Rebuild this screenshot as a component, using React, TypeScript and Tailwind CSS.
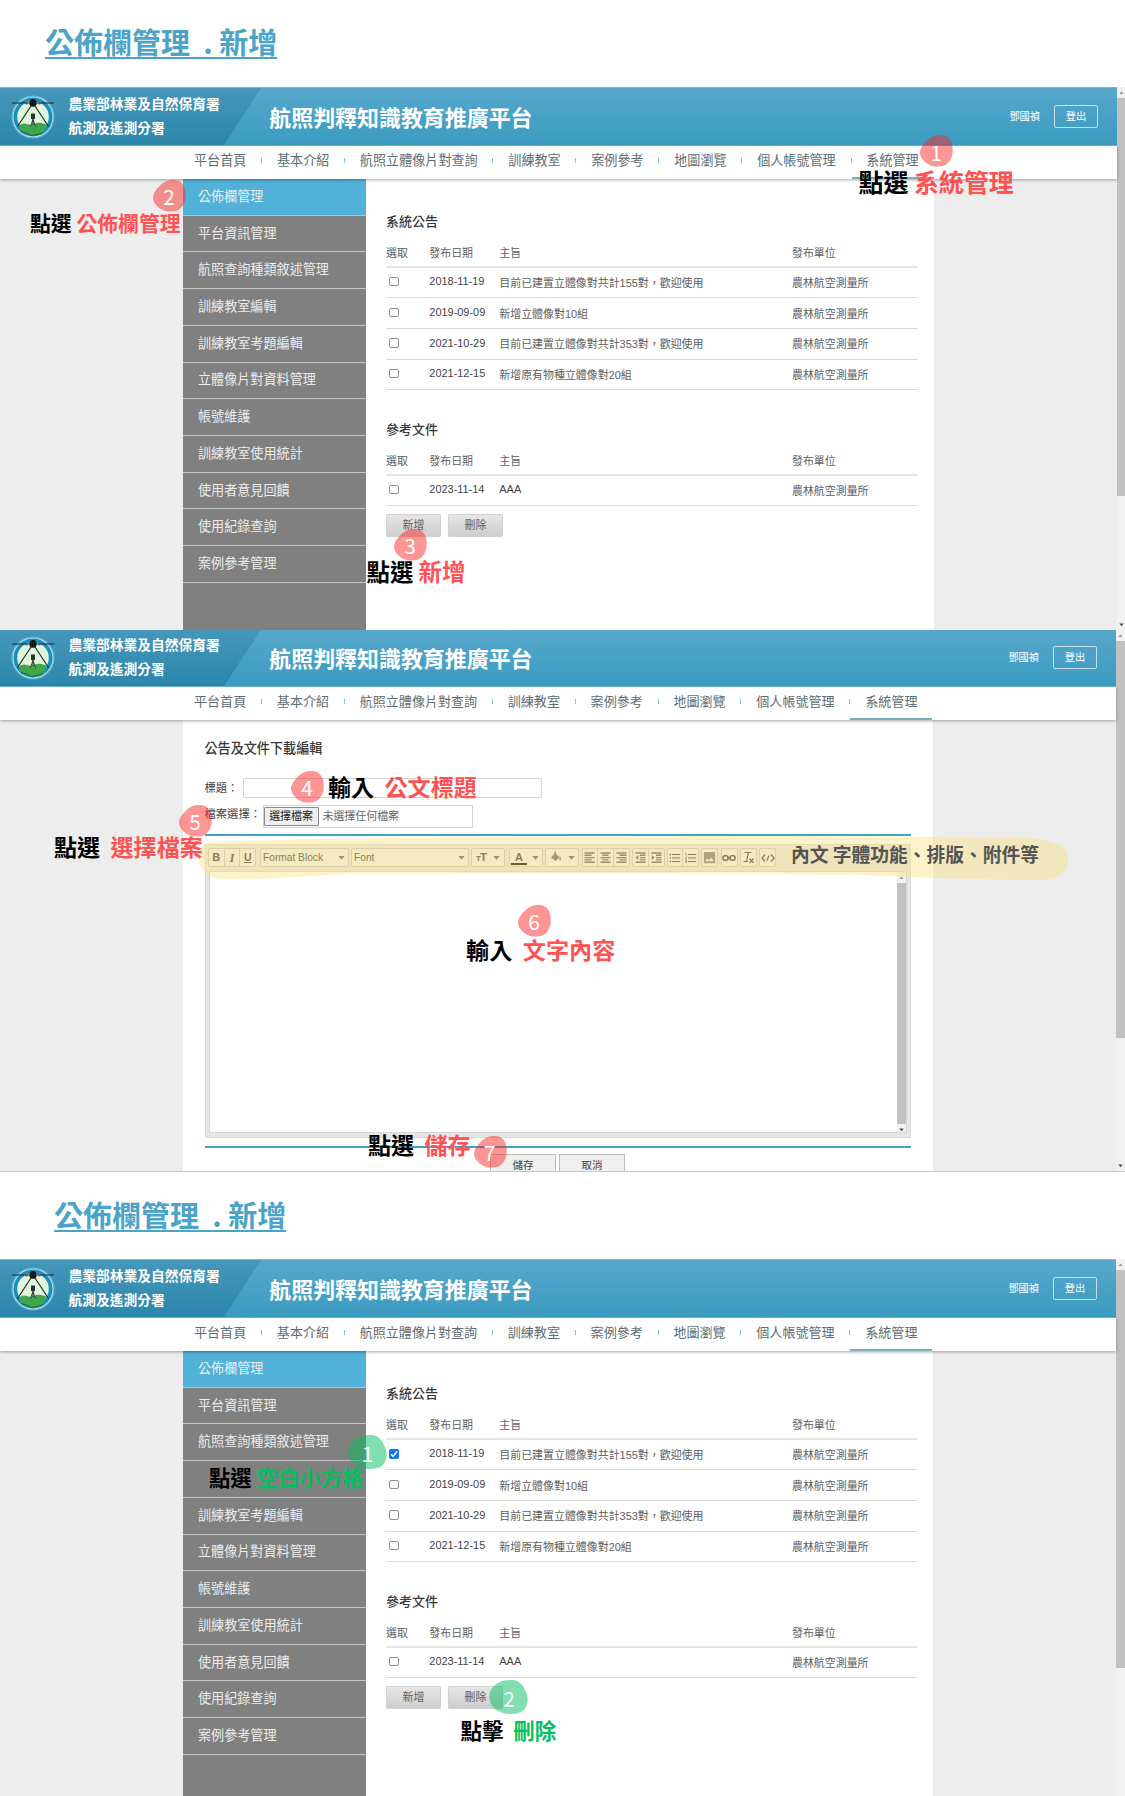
import React from "react";
import { MdFormatListBulleted, MdFormatListNumbered, MdImage } from "react-icons/md";

const navItems = ["平台首頁", "基本介紹", "航照立體像片對查詢", "訓練教室", "案例參考", "地圖瀏覽", "個人帳號管理", "系統管理"];

const sideItems = [
  "公佈欄管理",
  "平台資訊管理",
  "航照查詢種類敘述管理",
  "訓練教室編輯",
  "訓練教室考題編輯",
  "立體像片對資料管理",
  "帳號維護",
  "訓練教室使用統計",
  "使用者意見回饋",
  "使用紀錄查詢",
  "案例參考管理",
];

type Row = { date: string; subject: string; unit: string };

const notices: Row[] = [
  { date: "2018-11-19", subject: "目前已建置立體像對共計155對，歡迎使用", unit: "農林航空測量所" },
  { date: "2019-09-09", subject: "新增立體像對10組", unit: "農林航空測量所" },
  { date: "2021-10-29", subject: "目前已建置立體像對共計353對，歡迎使用", unit: "農林航空測量所" },
  { date: "2021-12-15", subject: "新增原有物種立體像對20組", unit: "農林航空測量所" },
];

const documents: Row[] = [{ date: "2023-11-14", subject: "AAA", unit: "農林航空測量所" }];

function Logo() {
  return (
    <svg className="h-[46px] w-[46px] shrink-0" viewBox="0 0 46 46">
      <circle cx="23" cy="23" r="21.6" fill="#8fd0ea" opacity="0.55" />
      <circle cx="23" cy="23" r="20.3" fill="#c5e6f2" />
      <circle cx="23" cy="23" r="19.5" fill="#1690bd" />
      <circle cx="23" cy="23" r="15.8" fill="#e0f4dc" />
      <path d="M9.500 31 Q13 28.500 17 30 T25 29.500 T36.500 30.500 L34 37.500 Q28 42 22.500 41.500 Q15 39.500 11 38 Z" fill="#3fa64c" />
      <path d="M11 37.500 Q16 38.500 22 41.500 Q29 40.500 33 38.500" stroke="#1c5a34" strokeWidth="0.9" fill="none" />
      <path d="M2 9 H44" stroke="#1b2b33" strokeWidth="1" fill="none" />
      <path d="M21 12 L7.500 32.500 M25 12 L38.500 32.500" stroke="#20302f" strokeWidth="1.200" fill="none" />
      <path d="M19.500 7 L21.500 5 H24.500 L26.500 7 L26.500 11 L24.500 12.800 H21.500 L19.500 11 Z" fill="#141a1c" />
      <circle cx="16.500" cy="9.200" r="1.300" fill="#8b4b4b" />
      <circle cx="29.500" cy="9.200" r="1.300" fill="#8b4b4b" />
      <path d="M21 19.500 H25 V25 H21 Z M22.400 25 H23.600 V31 H22.400 Z" fill="#26332e" />
      <path d="M23 25.500 L20.500 32.500 M23 25.500 L25.500 32.500" stroke="#26332e" strokeWidth="0.9" />
    </svg>
  );
}

function SiteHeader({ trimmed, narrow }: { trimmed?: boolean; narrow?: boolean }) {
  return (
    <header
      className={
        "relative shrink-0 overflow-hidden border-b border-[#6fb7d3] bg-linear-to-b from-[#55a8cb] to-[#3b9bc1] text-white " +
        (trimmed ? "h-[57px]" : "h-[59px] border-t border-t-[#7db6cf]")
      }
    >
      <div className="absolute inset-y-0 left-0 w-[261px] bg-linear-to-b from-[#4597bb] to-[#2b86ab] [clip-path:polygon(0_0,100%_0,224px_100%,0_100%)]" />
      <div className={"relative flex h-[59px] items-start " + (trimmed ? "-mt-[2px]" : "-mt-px")}>
        <div className="w-[68.500px] pt-[6.500px] pl-[9.500px]">
          <Logo />
        </div>
        <div className="w-[200.800px] pt-[6px] text-[13.750px] leading-[23.500px] font-bold whitespace-nowrap">
          <div>農業部林業及自然保育署</div>
          <div>航測及遙測分署</div>
        </div>
        <h1 className="flex-1 pt-[17px] text-[21.950px] leading-[30px] font-bold whitespace-nowrap">航照判釋知識教育推廣平台</h1>
        <div className={"flex items-center pt-[18px] text-[10.200px] " + (narrow ? "pr-[19px]" : "pr-[19px]")}>
          <span className="mr-[14px] pt-px">鄧國禎</span>
          <span className="flex h-[22.500px] w-[44px] items-center justify-center rounded-[2px] border border-[#c3e0ec]">登出</span>
        </div>
      </div>
    </header>
  );
}

function NavBar({ narrow, underline }: { narrow?: boolean; underline: string }) {
  return (
    <nav
      className={
        "relative z-10 flex h-[33px] shrink-0 items-start bg-white pl-[194px] whitespace-nowrap text-[#5d6e74] shadow-[0_1px_3px_rgba(0,0,0,0.35)] " +
        (narrow ? "text-[13.060px]" : "text-[13.090px]")
      }
    >
      {navItems.map((item, i) => (
        <React.Fragment key={item}>
          {i > 0 && (
            <span className="mt-[12px] flex w-[30.650px] justify-center">
              <span className="h-[5px] w-px bg-[#7cc3de]" />
            </span>
          )}
          <span className="leading-[30px]">{item}</span>
        </React.Fragment>
      ))}
      <span className={"absolute bottom-0 h-[2px] w-[82px] bg-[#78adc3] " + underline} />
    </nav>
  );
}

function ScrollBar({ thumb, bottomArrow, className }: { thumb: string; bottomArrow?: boolean; className: string }) {
  return (
    <div className={"flex flex-col items-center bg-[#f1f1f1] " + className}>
      <svg className="h-[11px] w-[7px] shrink-0" viewBox="0 0 7 11">
        <path d="M1.500 7 L3.500 4.500 L5.500 7 Z" fill="#909090" />
      </svg>
      <div className={"w-full shrink-0 bg-[#c1c1c1] " + thumb} />
      {bottomArrow && (
        <svg className="mt-auto h-[11px] w-[7px] shrink-0" viewBox="0 0 7 11">
          <path d="M1.300 4.500 L3.500 7.300 L5.700 4.500 Z" fill="#4a4a4a" />
        </svg>
      )}
    </div>
  );
}

function SideMenu({ blankRow }: { blankRow?: number }) {
  return (
    <aside className="w-[183px] shrink-0 overflow-hidden bg-[#808080] text-[13.100px] text-[#ececec]">
      {sideItems.map((item, i) => (
        <div
          key={item}
          className={
            "flex h-[36.720px] items-center border-b border-[#c4c4c4] pb-[0.500px] pl-[15px] " + (i === 0 ? "bg-[#51b1d8]" : "")
          }
        >
          {i === blankRow ? null : item}
        </div>
      ))}
    </aside>
  );
}

function Check({ checked }: { checked?: boolean }) {
  if (checked) {
    return (
      <span className="mb-px ml-[3px] flex size-[10px] items-center justify-center rounded-[2px] bg-[#0b76f0]">
        <svg viewBox="0 0 10 10" className="size-[10px]">
          <path d="M2 5.200 L4.100 7.300 L8 2.600" stroke="#fff" strokeWidth="1.500" fill="none" />
        </svg>
      </span>
    );
  }
  return <span className="mb-[1.500px] ml-[3px] size-[9.500px] rounded-[2px] border border-[#8f8f8f] bg-white" />;
}

function DataTable({ title, rows, checkedRow }: { title: string; rows: Row[]; checkedRow?: number }) {
  return (
    <section className="text-[10.950px] whitespace-nowrap text-[#606060]">
      <h2 className="h-[21px] text-[13px] leading-[21px] font-medium text-[#3a3a3a]">{title}</h2>
      <div className="grid h-[35.600px] grid-cols-[43.300px_70px_292.700px_1fr] items-center border-b-2 border-[#e6e6e6] pt-[8px]">
        <span>選取</span>
        <span>發布日期</span>
        <span>主旨</span>
        <span>發布單位</span>
      </div>
      {rows.map((row, i) => (
        <div
          key={row.date}
          className="grid h-[30.650px] grid-cols-[43.300px_70px_292.700px_1fr] items-center border-b border-[#d8d8d8]"
        >
          <Check checked={checkedRow === i} />
          <span className="pb-[1.500px] text-[#444]">{row.date}</span>
          <span className={row.subject === "AAA" ? "pb-[1.500px] text-[#444]" : "pt-[2px]"}>{row.subject}</span>
          <span className="pt-[2px]">{row.unit}</span>
        </div>
      ))}
    </section>
  );
}

function GreyButton({ label }: { label: string }) {
  return (
    <span className="flex h-[23px] w-[55px] items-center justify-center rounded-[1px] border border-[#d2d2d2] bg-linear-to-b from-[#e6e6e6] to-[#cecece] text-[10.950px] text-[#606060]">
      {label}
    </span>
  );
}

function BulletinPage({
  narrow,
  checkedRow,
  blankRow,
  thumb,
}: {
  narrow?: boolean;
  checkedRow?: number;
  blankRow?: number;
  thumb: string;
}) {
  return (
    <div className="flex h-full">
      <div className={"flex shrink-0 flex-col " + (narrow ? "w-[1116px]" : "w-[1117px]")}>
        <SiteHeader narrow={narrow} />
        <NavBar narrow={narrow} underline={narrow ? "left-[850px]" : "left-[851.500px]"} />
        <div className="flex min-h-0 flex-1 bg-[#ededed] pl-[183px]">
          <SideMenu blankRow={blankRow} />
          <main className={"bg-white pt-[32px] pl-[20px] " + (narrow ? "w-[567px]" : "w-[568px]")}>
            <div className={narrow ? "w-[531px]" : "w-[532px]"}>
              <DataTable title="系統公告" rows={notices} checkedRow={checkedRow} />
              <div className="h-[28.800px]" />
              <DataTable title="參考文件" rows={documents} />
              <div className="mt-[8px] flex gap-[7px]">
                <GreyButton label="新增" />
                <GreyButton label="刪除" />
              </div>
            </div>
          </main>
        </div>
      </div>
      <ScrollBar className="flex-1" thumb={thumb} bottomArrow={!narrow} />
    </div>
  );
}

function Tool({ children, className }: { children: React.ReactNode; className: string }) {
  return (
    <div className={"flex h-[19px] shrink-0 items-stretch divide-x divide-[#c4c4c4] rounded-[2px] border border-[#c4c4c4] bg-[#f0f0f0] " + className}>
      {children}
    </div>
  );
}

function Cell({ children, className = "justify-center" }: { children: React.ReactNode; className?: string }) {
  return <span className={"flex min-w-0 flex-1 items-center " + className}>{children}</span>;
}

function Caret() {
  return (
    <svg className="h-[4px] w-[7px] shrink-0" viewBox="0 0 7 4">
      <path d="M0.300 0 H6.700 L3.500 3.800 Z" fill="#5c5c5c" />
    </svg>
  );
}

function LinesIcon({ d, arrow }: { d: string; arrow?: string }) {
  return (
    <svg className="h-[11px] w-[11px] text-[#555]" viewBox="0 0 11 11">
      <path d={d} stroke="currentColor" strokeWidth="1.400" fill="none" />
      {arrow && <path d={arrow} fill="currentColor" />}
    </svg>
  );
}

function EditorToolbar() {
  return (
    <div className="flex h-[26px] items-center pb-px pl-[2.500px] text-[#383838]">
      <Tool className="mr-[4px] w-[48px]">
        <Cell className="justify-center text-[11px] font-black">B</Cell>
        <Cell className="justify-center font-['Liberation_Serif',serif] text-[12px] font-bold italic">I</Cell>
        <Cell className="justify-center text-[10.500px] font-bold underline">U</Cell>
      </Tool>
      <Tool className="mr-[2px] w-[89px]">
        <Cell className="justify-between pr-[3px] pl-[2px] text-[10.200px] whitespace-nowrap">
          Format Block
          <Caret />
        </Cell>
      </Tool>
      <Tool className="mr-[2px] w-[118px]">
        <Cell className="justify-between pr-[3px] pl-[2px] text-[10.200px]">
          Font
          <Caret />
        </Cell>
      </Tool>
      <Tool className="mr-[4px] w-[34px]">
        <Cell className="justify-between px-[4px]">
          <span className="flex items-baseline font-bold">
            <span className="text-[8px]">T</span>
            <span className="-ml-px text-[11.500px]">T</span>
          </span>
          <Caret />
        </Cell>
      </Tool>
      <Tool className="mr-[1.500px] w-[34px]">
        <Cell className="justify-between pr-[3px] pl-px">
          <span className="flex h-[14px] w-[16px] justify-center border-b-2 border-black text-[11px] leading-[12px] font-bold">A</span>
          <Caret />
        </Cell>
      </Tool>
      <Tool className="mr-[3px] w-[34px]">
        <Cell className="justify-between pr-[3px] pl-[3px]">
          <svg className="h-[14px] w-[14px]" viewBox="0 0 14 14">
            <path d="M2 6.500 L5.500 2.500 V0.500 H7 V3 L10.500 6.500 L6.500 10 Z M10.800 4.500 Q12.500 7 11.600 9.500 Q10.300 9.500 10.300 8 Z" fill="#666" />
            <path d="M0 12.500 H13" stroke="#fff" strokeWidth="2" />
          </svg>
          <Caret />
        </Cell>
      </Tool>
      <Tool className="mr-[2px] w-[48.500px]">
        <Cell><LinesIcon d="M0.500 1 H10.500 M0.500 3.300 H7.500 M0.500 5.600 H10.500 M0.500 7.900 H7.500 M0.500 10.200 H10.500" /></Cell>
        <Cell><LinesIcon d="M0.500 1 H10.500 M2.500 3.300 H8.500 M0.500 5.600 H10.500 M2.500 7.900 H8.500 M0.500 10.200 H10.500" /></Cell>
        <Cell><LinesIcon d="M0.500 1 H10.500 M3.500 3.300 H10.500 M0.500 5.600 H10.500 M3.500 7.900 H10.500 M0.500 10.200 H10.500" /></Cell>
      </Tool>
      <Tool className="mr-[2px] w-[32.500px]">
        <Cell><LinesIcon d="M0.500 1 H10.500 M5 3.300 H10.500 M5 5.600 H10.500 M5 7.900 H10.500 M0.500 10.200 H10.500" arrow="M3.300 3 V8.200 L0.500 5.600 Z" /></Cell>
        <Cell><LinesIcon d="M0.500 1 H10.500 M5 3.300 H10.500 M5 5.600 H10.500 M5 7.900 H10.500 M0.500 10.200 H10.500" arrow="M0.800 3 V8.200 L3.600 5.600 Z" /></Cell>
      </Tool>
      <Tool className="mr-[2px] w-[32.500px]">
        <Cell><MdFormatListBulleted className="size-[14px]" /></Cell>
        <Cell><MdFormatListNumbered className="size-[14px]" /></Cell>
      </Tool>
      <Tool className="mr-[2.500px] w-[17px]">
        <Cell><MdImage className="size-[15px] shrink-0 text-[#777]" /></Cell>
      </Tool>
      <Tool className="mr-[2.500px] w-[17px]">
        <Cell>
          <svg className="h-[8px] w-[14px]" viewBox="0 0 14 8" fill="none" stroke="currentColor" strokeWidth="1.500">
            <rect x="1" y="1.700" width="5" height="4.600" rx="2" />
            <rect x="8" y="1.700" width="5" height="4.600" rx="2" />
            <path d="M5 4 H9" />
          </svg>
        </Cell>
      </Tool>
      <Tool className="mr-[2px] w-[17px]">
        <Cell>
          <svg className="size-[13px]" viewBox="0 0 13 13" fill="none" stroke="currentColor" strokeWidth="1.200">
            <path d="M2.500 1.500 H9.500 M6.500 1.500 L4.500 10 M1.500 10.500 H6 M7.500 7.500 L11.500 12 M11.500 7.500 L7.500 12" />
          </svg>
        </Cell>
      </Tool>
      <Tool className="w-[17px]">
        <Cell>
          <svg className="h-[10px] w-[14px]" viewBox="0 0 14 10" fill="none" stroke="currentColor" strokeWidth="1.300">
            <path d="M4 1.500 L1 5 L4 8.500 M10 1.500 L13 5 L10 8.500 M8 2.500 L6 7.500" />
          </svg>
        </Cell>
      </Tool>
    </div>
  );
}

function EditorPage() {
  return (
    <div className="flex h-full">
      <div className="flex w-[1116px] shrink-0 flex-col">
        <SiteHeader trimmed narrow />
        <NavBar narrow underline="left-[850px]" />
        <div className="min-h-0 flex-1 overflow-hidden bg-[#ededed] pl-[183px]">
          <main className="h-full w-[750px] bg-white pt-[19px] pl-[21.500px] text-[#444]">
            <h2 className="h-[20px] text-[13.100px] leading-[20px] font-medium text-[#3a3a3a]">公告及文件下載編輯</h2>
            <div className="mt-[19px] flex h-[20px] items-center text-[11.300px]">
              <span className="w-[38.500px] whitespace-nowrap">標題：</span>
              <span className="h-[20px] w-[298.500px] rounded-[2px] border border-[#d3d3d3] bg-white" />
            </div>
            <div className="mt-[7px] flex h-[23px] items-center text-[11.300px]">
              <span className="w-[58px] pb-[4px] whitespace-nowrap">檔案選擇：</span>
              <div className="flex h-[23px] w-[210px] items-center border border-[#d3d3d3] text-[10.950px] text-[#666]">
                <span className="flex h-[19px] w-[55px] items-center justify-center rounded-[1px] border border-[#8a8a8a] bg-[#efefef] text-[#222]">
                  選擇檔案
                </span>
                <span className="pl-[4px]">未選擇任何檔案</span>
              </div>
            </div>
            <div className="mt-[6px] h-[2px] w-[706px] bg-[#45a0c5]" />
            <div className="mt-[8px] flex h-[294px] w-[706px] flex-col border border-[#dadada] bg-[#e6e6e6]">
              <EditorToolbar />
              <div className="mx-[3px] mb-[4px] flex min-h-0 flex-1 justify-end border border-[#d6d6d6] bg-white">
                <ScrollBar className="w-[9px]" thumb="h-[241px]" bottomArrow />
              </div>
            </div>
            <div className="mt-[8px] h-[2px] w-[706px] bg-[#45a0c5]" />
            <div className="mt-[6px] flex gap-[3px] pl-[285.500px] text-[10.500px]">
              <span className="flex h-[24px] w-[66px] items-center justify-center border border-[#bcbcbc] bg-[#efefef]">儲存</span>
              <span className="flex h-[24px] w-[66px] items-center justify-center border border-[#bcbcbc] bg-[#efefef]">取消</span>
            </div>
          </main>
        </div>
      </div>
      <ScrollBar className="flex-1" thumb="h-[397px]" bottomArrow />
    </div>
  );
}

function Blob({ n, place, digit, green }: { n: number; place: string; digit: string; green?: boolean }) {
  return (
    <div className={"absolute z-20 " + place}>
      {green ? (
        <svg className="h-[34px] w-[39px]" viewBox="0 0 39 34">
          <path d="M21 0 C30 -0.500 34 5 36 10 C38 14 39 17 38.600 21 C38 29 33 33 26 33.800 C18 34.500 10 33 5 28 C0 23 -1 15 2 10 C6 3 13 0 21 0 Z" fill="#04bf5f" fillOpacity="0.5" />
        </svg>
      ) : (
        <svg className="h-[32px] w-[33px]" viewBox="0 0 33 32">
          <path d="M19 0 C27 -0.500 32 4 32.500 12 C33 16 32.800 21 30 25.500 C26.500 31 21 32 15 31.500 C8 30.500 0.500 25 0 18 C-0.300 13 5 7 10 3 C13 1 16 0.200 19 0 Z" fill="#fb2727" fillOpacity="0.49" />
        </svg>
      )}
      <span className={"absolute w-[20px] text-center text-[21px] leading-[24px] text-white " + digit}>{n}</span>
    </div>
  );
}

function Callout({ lead, target, className, green }: { lead: string; target: string; className: string; green?: boolean }) {
  return (
    <p className={"absolute z-20 leading-[30px] font-bold whitespace-pre text-black " + className}>
      {lead}
      <span className={green ? "text-[#04bf5f]" : "text-[#ff5252]"}>{target}</span>
    </p>
  );
}

function SectionTitle() {
  return (
    <h1 className="text-[29px] leading-[42px] font-bold whitespace-pre text-[#4ba3c8] underline decoration-[2px] underline-offset-[2.500px]">
      {"公佈欄管理  . 新增"}
    </h1>
  );
}

export default function App() {
  return (
    <div className="relative flex h-[1796px] w-[1125px] flex-col overflow-hidden bg-white font-['Liberation_Sans','Noto_Sans_CJK_TC',sans-serif]">
      <div className="h-[87px] shrink-0 pt-[20px] pl-[45px] font-['Noto_Sans_CJK_TC',sans-serif]">
        <SectionTitle />
      </div>
      <div className="h-[543px] shrink-0 overflow-hidden">
        <BulletinPage thumb="h-[398px]" />
      </div>
      <div className="h-[541px] shrink-0 overflow-hidden">
        <EditorPage />
      </div>
      <div className="h-[88px] shrink-0 border-t border-[#c6c6cc] pt-[21px] pl-[54px] font-['Noto_Sans_CJK_TC',sans-serif]">
        <SectionTitle />
      </div>
      <div className="h-[537px] shrink-0 overflow-hidden">
        <BulletinPage narrow checkedRow={0} blankRow={3} thumb="h-[398px]" />
      </div>

      {/* Marker stroke over the editor toolbar */}
      <svg className="absolute top-[835px] left-[198px] z-10 h-[47px] w-[871px]" viewBox="0 0 871 47">
        <path
          d="M14 7 C120 2 400 2 560 1 L800 2 C850 2 870 8 870 24 C870 38 860 45 842 45 C780 45 720 42 660 40 C500 38 300 38 150 39 C90 42 60 45 24 44 C8 43 1 33 1 22 C1 13 5 8 14 7 Z"
          fill="#fbe07c"
          fillOpacity="0.42"
        />
      </svg>

      <div className="font-['Noto_Sans_CJK_TC',sans-serif]">
        <Blob n={1} place="top-[135px] left-[920px]" digit="top-[5px] left-[6px]" />
        <Blob n={2} place="top-[180px] left-[153px]" digit="top-[4px] left-[6px]" />
        <Blob n={3} place="top-[529px] left-[394px]" digit="top-[4px] left-[6px]" />
        <Blob n={4} place="top-[771px] left-[291px]" digit="top-[4px] left-[6px]" />
        <Blob n={5} place="top-[805px] left-[179px]" digit="top-[4px] left-[6px]" />
        <Blob n={6} place="top-[905px] left-[518px]" digit="top-[4px] left-[6px]" />
        <Blob n={7} place="top-[1136px] left-[473.500px]" digit="top-[4px] left-[6px]" />
        <Blob n={1} green place="top-[1435px] left-[347.500px]" digit="top-[6px] left-[10px]" />
        <Blob n={2} green place="top-[1680px] left-[489px]" digit="top-[6px] left-[10px]" />

        <Callout lead="點選 " target="系統管理" className="top-[166px] left-[858.500px] text-[24.950px]" />
        <Callout lead="點選 " target="公佈欄管理" className="top-[207px] left-[30px] text-[20.850px]" />
        <Callout lead="點選 " target="新增" className="top-[556px] left-[366.500px] text-[23.400px]" />
        <Callout lead="輸入  " target="公文標題" className="top-[771px] left-[328px] text-[23.050px]" />
        <Callout lead="點選  " target="選擇檔案" className="top-[831px] left-[54px] text-[23.050px]" />
        <Callout lead="輸入  " target="文字內容" className="top-[934px] left-[466px] text-[23.150px]" />
        <Callout lead="點選  " target="儲存" className="top-[1129px] left-[368px] text-[23.050px]" />
        <Callout green lead="點選 " target="空白小方格" className="top-[1462px] left-[209px] text-[21.350px]" />
        <Callout green lead="點擊  " target="刪除" className="top-[1715px] left-[460.500px] text-[21.500px]" />
        <p className="absolute top-[838.500px] left-[791px] z-20 text-[18.750px] leading-[30px] font-bold whitespace-pre text-[#545454]">
          內文 字體功能、排版、附件等
        </p>
      </div>
    </div>
  );
}
